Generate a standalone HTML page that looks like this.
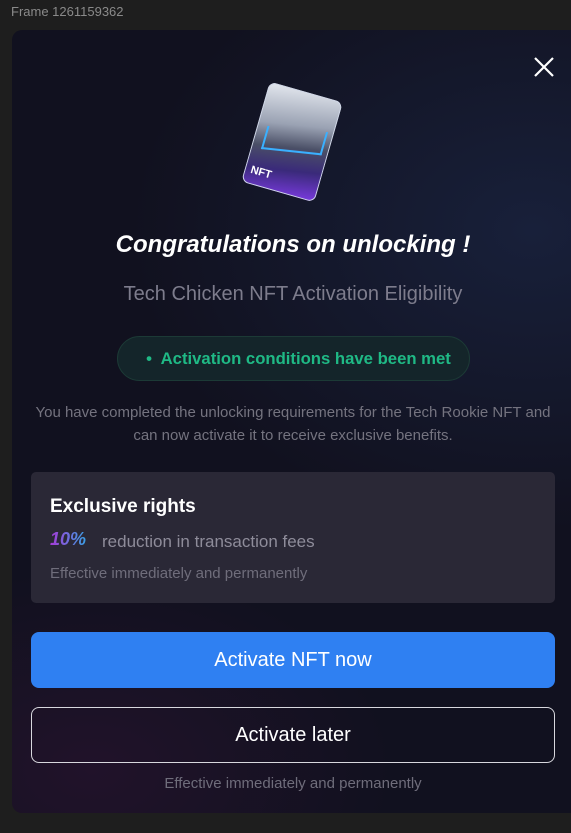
<!DOCTYPE html>
<html><head><style>
body{margin:0;width:571px;height:833px;background:#1e1e1e;font-family:"Liberation Sans",sans-serif;position:relative;overflow:hidden}
.lbl{position:absolute;left:11px;top:4px;font-size:13px;color:#8a8a8a}
.panel{position:absolute;left:12px;top:30px;width:580px;height:783px;border-radius:10px;background:radial-gradient(ellipse 300px 200px at 80px 740px,#21122a 0%,rgba(33,18,42,0) 100%),radial-gradient(ellipse 400px 300px at 520px 200px,#18203a 0%,rgba(24,32,58,0) 100%),#11111f;}
.c{position:absolute;left:0;width:586px;text-align:center}
.x{position:absolute;left:533px;top:56px}
.card{position:absolute;left:254px;top:90px;width:76px;height:104px;border-radius:7px;transform:rotate(16deg);background:linear-gradient(170deg,#e4e8ef 0%,#9aa2b3 35%,#4a4f66 55%,#3a2a7a 75%,#7a3ae0 100%);box-shadow:0 0 0 1px #cfd6e6 inset}
.card:before{content:"";position:absolute;left:10px;top:38px;width:56px;height:22px;border-bottom:2px solid #3ab0ff;border-left:2px solid #3ab0ff;border-right:2px solid #3ab0ff;transform:skewY(-10deg)}
.card span{position:absolute;left:6px;bottom:8px;color:#fff;font-weight:bold;font-size:11px}
.pill{position:absolute;left:117px;top:336px;width:353px;height:45px;box-sizing:border-box;border:1px solid #1c3a36;border-radius:23px;background:#14252a;color:#1fb985;font-weight:bold;font-size:16.7px;line-height:43px;text-align:center;padding-left:10px}
.box{position:absolute;left:31px;top:472px;width:524px;height:131px;border-radius:5px;background:#2a2836}
.btn{position:absolute;left:31px;width:524px;height:56px;border-radius:8px;text-align:center;line-height:56px;color:#fff;font-size:20px}
</style></head><body>
<div class="lbl">Frame 1261159362</div>
<div class="panel"></div>
<svg class="x" width="22" height="22" viewBox="0 0 22 22"><path d="M2 2L20 20M20 2L2 20" stroke="#fff" stroke-width="2.2"/></svg>
<div class="card"><span>NFT</span></div>
<div class="c" style="top:231px;font-size:24px;font-weight:bold;font-style:italic;color:#fff">Congratulations on unlocking !</div>
<div class="c" style="top:283px;font-size:20px;color:#7d7c8c">Tech Chicken NFT Activation Eligibility</div>
<div class="pill">•&nbsp; Activation conditions have been met</div>
<div class="c" style="top:401px;font-size:15px;line-height:23px;color:#74737f">You have completed the unlocking requirements for the Tech Rookie NFT and<br>can now activate it to receive exclusive benefits.</div>
<div class="box">
<div style="position:absolute;left:19px;top:24px;font-size:19px;font-weight:bold;color:#fff">Exclusive rights</div>
<div style="position:absolute;left:19px;top:57px;font-size:18px;font-weight:bold;font-style:italic;background:linear-gradient(90deg,#a63ad6,#3aa0e6);-webkit-background-clip:text;color:transparent">10%</div>
<div style="position:absolute;left:71px;top:60px;font-size:17px;color:#8e8c9a">reduction in transaction fees</div>
<div style="position:absolute;left:19px;top:93px;font-size:15px;color:#6f6d7b">Effective immediately and permanently</div>
</div>
<div class="btn" style="top:632px;background:#2f80f2">Activate NFT now</div>
<div class="btn" style="top:707px;box-sizing:border-box;border:1.5px solid #d8d8de;line-height:54px">Activate later</div>
<div class="c" style="top:775px;font-size:15px;color:#6f6d7b">Effective immediately and permanently</div>
</body></html>
